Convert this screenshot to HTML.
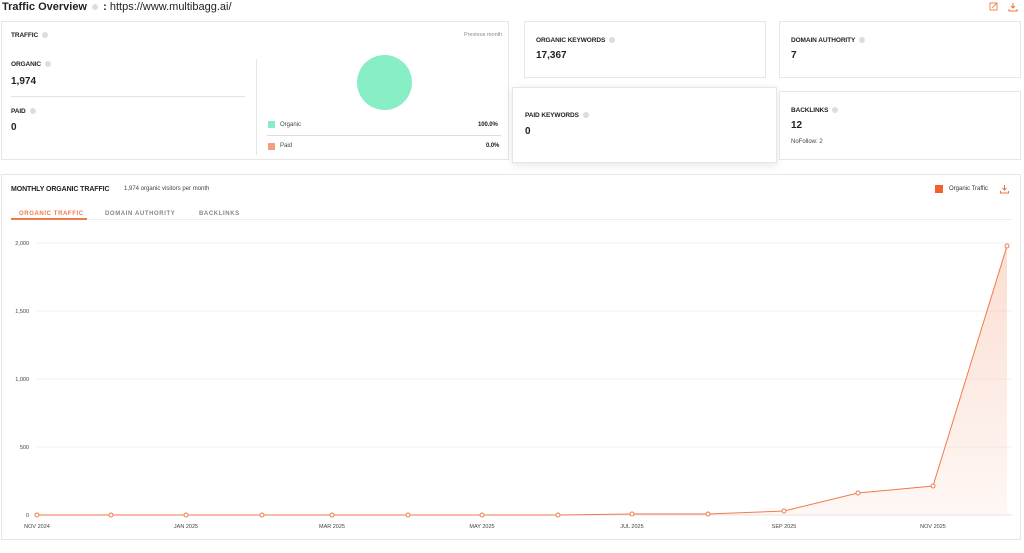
<!DOCTYPE html>
<html><head><meta charset="utf-8"><style>
*{box-sizing:border-box;margin:0;padding:0}
body{width:1024px;height:553px;background:#fff;font-family:"Liberation Sans",sans-serif;color:#222;position:relative;overflow:hidden}
.abs{position:absolute}
.card{position:absolute;border:1px solid #e6e6e6;background:#fff}
.lbl{font-size:6.5px;font-weight:bold;color:#222;letter-spacing:-0.1px}
.val{font-size:10px;font-weight:bold;color:#222}
.q{display:inline-block;width:6px;height:6px;border-radius:50%;background:#ddd;vertical-align:middle;margin-left:4px}
.small{font-size:6px;color:#444}
</style></head><body>
<div class="abs" style="left:2px;top:1px;font-size:11px"><b>Traffic Overview</b> <span class="q" style="margin:0 2px"></span> <b>:</b> https://www.multibagg.ai/</div>
<svg class="abs" style="left:989px;top:2px" width="30" height="10" viewBox="0 0 30 10"><rect x="1" y="1" width="7" height="7" fill="none" stroke="#f08a5d" stroke-width="1"/><path d="M3 6l2-2 3-3" stroke="#f08a5d" fill="none"/><path d="M24 1v5M22 4l2 2 2-2M20 7v2h8V7" stroke="#f0703a" fill="none" stroke-width="1"/></svg>

<div class="card" style="left:1px;top:21px;width:508px;height:139px"></div>
<div class="abs lbl" style="left:11px;top:32px">TRAFFIC<span class="q"></span></div>
<div class="abs small" style="left:464px;top:32px;font-size:5.5px;color:#888">Previous month</div>
<div class="abs lbl" style="left:11px;top:61px">ORGANIC<span class="q"></span></div>
<div class="abs val" style="left:11px;top:76px">1,974</div>
<div class="abs" style="left:11px;top:96px;width:234px;height:1px;background:#e3e3e3"></div>
<div class="abs lbl" style="left:11px;top:108px">PAID<span class="q"></span></div>
<div class="abs val" style="left:11px;top:122px">0</div>
<div class="abs" style="left:256px;top:59px;width:1px;height:96px;background:#e6e6e6"></div>
<div class="abs" style="left:357px;top:55px;width:55px;height:55px;border-radius:50%;background:#88eec6"></div>
<div class="abs" style="left:268px;top:121px;width:7px;height:7px;background:#88eec6"></div>
<div class="abs small" style="left:280px;top:122px">Organic</div>
<div class="abs lbl" style="left:478px;top:122px;font-size:6px">100.0%</div>
<div class="abs" style="left:267px;top:135px;width:234px;height:1px;background:#ddd"></div>
<div class="abs" style="left:268px;top:143px;width:7px;height:7px;background:#f4a07e"></div>
<div class="abs small" style="left:280px;top:143px">Paid</div>
<div class="abs lbl" style="left:486px;top:143px;font-size:6px">0.0%</div>

<div class="card" style="left:524px;top:21px;width:242px;height:57px"></div>
<div class="abs lbl" style="left:536px;top:37px">ORGANIC KEYWORDS<span class="q"></span></div>
<div class="abs val" style="left:536px;top:50px">17,367</div>
<div class="card" style="left:779px;top:21px;width:242px;height:57px"></div>
<div class="abs lbl" style="left:791px;top:37px">DOMAIN AUTHORITY<span class="q"></span></div>
<div class="abs val" style="left:791px;top:50px">7</div>
<div class="card" style="left:512px;top:87px;width:265px;height:76px;box-shadow:0 2px 8px rgba(0,0,0,.1)"></div>
<div class="abs lbl" style="left:525px;top:112px">PAID KEYWORDS<span class="q"></span></div>
<div class="abs val" style="left:525px;top:126px">0</div>
<div class="card" style="left:779px;top:91px;width:242px;height:69px"></div>
<div class="abs lbl" style="left:791px;top:107px">BACKLINKS<span class="q"></span></div>
<div class="abs val" style="left:791px;top:120px">12</div>
<div class="abs small" style="left:791px;top:139px">NoFollow: 2</div>

<div class="card" style="left:1px;top:174px;width:1020px;height:366px"></div>
<div class="abs lbl" style="left:11px;top:186px;font-size:7px">MONTHLY ORGANIC TRAFFIC</div>
<div class="abs small" style="left:124px;top:186px">1,974 organic visitors per month</div>
<div class="abs" style="left:935px;top:185px;width:8px;height:8px;background:#f0622d"></div>
<div class="abs small" style="left:949px;top:186px;color:#333">Organic Traffic</div>
<svg class="abs" style="left:1000px;top:185px" width="9" height="9" viewBox="0 0 9 9"><path d="M4.5 0v5M2.5 3l2 2 2-2M0.5 6v2h8V6" stroke="#f0703a" fill="none"/></svg>
<div class="abs" style="left:11px;top:219px;width:1000px;height:1px;background:#eee"></div>
<div class="abs" style="left:11px;top:218px;width:76px;height:1.5px;background:#f07a4a"></div>
<div class="abs" style="left:19px;top:211px;font-size:6px;font-weight:bold;color:#f07a4a;letter-spacing:.6px">ORGANIC TRAFFIC</div>
<div class="abs" style="left:105px;top:211px;font-size:6px;font-weight:bold;color:#888;letter-spacing:.6px">DOMAIN AUTHORITY</div>
<div class="abs" style="left:199px;top:211px;font-size:6px;font-weight:bold;color:#888;letter-spacing:.6px">BACKLINKS</div>

<svg class="abs" style="left:0;top:0" width="1024" height="553">
<defs><linearGradient id="g" x1="0" y1="0" x2="0" y2="1"><stop offset="0" stop-color="#f4a07e" stop-opacity=".35"/><stop offset="1" stop-color="#f4a07e" stop-opacity=".08"/></linearGradient></defs>
<g stroke="#f2f2f2" stroke-width="1"><line x1="37" y1="243" x2="1012" y2="243"/><line x1="37" y1="311" x2="1012" y2="311"/><line x1="37" y1="379" x2="1012" y2="379"/><line x1="37" y1="447" x2="1012" y2="447"/><line x1="37" y1="515" x2="1012" y2="515" stroke="#e6e6e6"/></g>
<g font-size="5.5" fill="#444" text-anchor="end" font-family="Liberation Sans"><text x="29" y="245">2,000</text><text x="29" y="313">1,500</text><text x="29" y="381">1,000</text><text x="29" y="449">500</text><text x="29" y="517">0</text></g>
<g font-size="5.5" fill="#444" text-anchor="middle" font-family="Liberation Sans"><text x="37" y="528">NOV 2024</text><text x="186" y="528">JAN 2025</text><text x="332" y="528">MAR 2025</text><text x="482" y="528">MAY 2025</text><text x="632" y="528">JUL 2025</text><text x="784" y="528">SEP 2025</text><text x="933" y="528">NOV 2025</text></g>
<path d="M37 515L111 515L186 515L262 515L332 515L408 515L482 515L558 515L632 514L708 514L784 511L858 493L933 486L1007 246L1007 515Z" fill="url(#g)"/>
<polyline points="37,515 111,515 186,515 262,515 332,515 408,515 482,515 558,515 632,514 708,514 784,511 858,493 933,486 1007,246" fill="none" stroke="#f07a4a" stroke-width="1"/>
<g fill="#fff" stroke="#f07a4a" stroke-width="1"><circle cx="37" cy="515" r="2"/><circle cx="111" cy="515" r="2"/><circle cx="186" cy="515" r="2"/><circle cx="262" cy="515" r="2"/><circle cx="332" cy="515" r="2"/><circle cx="408" cy="515" r="2"/><circle cx="482" cy="515" r="2"/><circle cx="558" cy="515" r="2"/><circle cx="632" cy="514" r="2"/><circle cx="708" cy="514" r="2"/><circle cx="784" cy="511" r="2"/><circle cx="858" cy="493" r="2"/><circle cx="933" cy="486" r="2"/><circle cx="1007" cy="246" r="2"/></g>
</svg>
</body></html>
